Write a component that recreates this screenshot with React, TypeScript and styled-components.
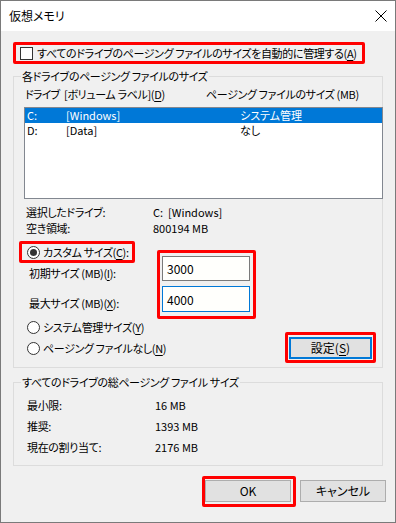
import React from "react";
import styled, { createGlobalStyle } from "styled-components";

const GlobalStyle = createGlobalStyle`
  html, body {
    margin: 0;
    padding: 0;
    background: #ffffff;
  }
  body {
    font-family: "Noto Sans CJK JP", "Noto Sans", sans-serif;
    font-size: 11px;
    font-feature-settings: "palt";
    letter-spacing: -0.35px;
    color: #000000;
  }
  u {
    text-underline-offset: 2px;
  }
`;

const Window = styled.div`
  width: 396px;
  height: 523px;
  box-sizing: border-box;
  border: 1px solid #7a7a7a;
  display: flex;
  flex-direction: column;
  background: #f0f0f0;
`;

const TitleBar = styled.div`
  height: 30px;
  flex-shrink: 0;
  background: #ffffff;
  display: flex;
  align-items: center;
  padding-left: 8px;
`;

const Title = styled.span`
  font-size: 12px;
  line-height: 16px;
  letter-spacing: 0;
`;

const CloseIcon = styled.svg`
  margin-left: auto;
  margin-right: 8px;
  display: block;
`;

const Body = styled.div`
  flex: 1;
  display: flex;
  flex-direction: column;
  padding: 0 12px;
`;

// red annotation frames drawn around the important controls
const Highlight = styled.div<{ $pad: string; $mt?: number; $ml?: string; $mr?: number }>`
  border: 3px solid #ff0000;
  border-radius: 2px;
  padding: ${(p) => p.$pad};
  margin-top: ${(p) => p.$mt ?? 0}px;
  margin-left: ${(p) => p.$ml ?? "0"};
  margin-right: ${(p) => p.$mr ?? 0}px;
  align-self: flex-start;
  display: flex;
  flex-direction: column;
`;

const CheckRow = styled.label`
  display: flex;
  align-items: center;
  height: 16px;
  gap: 4px;
  white-space: nowrap;
`;

const CheckBox = styled.span`
  width: 11px;
  height: 11px;
  border: 1px solid #333333;
  background: #ffffff;
  display: block;
`;

const Group = styled.fieldset<{ $mt: number; $pl: number; $pb: number }>`
  margin: ${(p) => p.$mt}px 0 0 0;
  padding: 0 0 ${(p) => p.$pb}px ${(p) => p.$pl}px;
  border: 1px solid #dcdcdc;
  min-width: 0;
`;

const Legend = styled.legend<{ $ml: number }>`
  margin-left: ${(p) => p.$ml}px;
  padding: 0 1px;
  line-height: 16px;
`;

const HeaderRow = styled.div`
  display: grid;
  grid-template-columns: 39px 142px 1fr;
  padding-left: 1px;
  margin-top: 2px;
  line-height: 16px;
  white-space: nowrap;
`;

const HeaderDrive = styled.span`
  letter-spacing: -0.8px;
`;

const ListBox = styled.div`
  margin-top: 5px;
  margin-right: -1px;
  height: 90px;
  border: 1px solid #828790;
  background: #ffffff;
`;

const ListRow = styled.div<{ $selected?: boolean }>`
  display: grid;
  grid-template-columns: 39px 174px 1fr;
  height: 15px;
  line-height: 15px;
  padding-left: 2px;
  letter-spacing: 0;
  background: ${(p) => (p.$selected ? "#0078d7" : "transparent")};
  color: ${(p) => (p.$selected ? "#ffffff" : "#000000")};
  white-space: nowrap;
  overflow: hidden;
`;

const InfoGrid = styled.div<{ $mt: number; $pl: number; $col: number; $rh: number }>`
  display: grid;
  grid-template-columns: ${(p) => p.$col}px 1fr;
  grid-auto-rows: ${(p) => p.$rh}px;
  align-items: center;
  margin-top: ${(p) => p.$mt}px;
  padding-left: ${(p) => p.$pl}px;
  white-space: nowrap;
`;

const Value = styled.span`
  letter-spacing: 0;
`;

const SplitRow = styled.div`
  display: flex;
  align-items: flex-start;
`;

const LeftCol = styled.div`
  width: 133px;
  flex-shrink: 0;
  display: flex;
  flex-direction: column;
`;

const RadioRow = styled.label`
  display: flex;
  align-items: center;
  height: 16px;
  gap: 3px;
  white-space: nowrap;
`;

const RadioCircle = styled.span<{ $checked?: boolean }>`
  width: 11px;
  height: 11px;
  border: 1px solid #333333;
  border-radius: 50%;
  background: #ffffff;
  display: flex;
  align-items: center;
  justify-content: center;
  &::after {
    content: "";
    width: 7px;
    height: 7px;
    border-radius: 50%;
    background: #333333;
    display: ${(p) => (p.$checked ? "block" : "none")};
  }
`;

const FieldLabel = styled.div<{ $mt: number }>`
  height: 26px;
  line-height: 26px;
  margin-top: ${(p) => p.$mt}px;
  padding-left: 5px;
  white-space: nowrap;
`;

const TextBox = styled.div<{ $focused?: boolean; $mt: number; $h: number }>`
  width: 82px;
  height: ${(p) => p.$h}px;
  margin-top: ${(p) => p.$mt}px;
  border: 1px solid ${(p) => (p.$focused ? "#0078d7" : "#7a7a7a")};
  background: #fffffc;
  display: flex;
  align-items: center;
  padding-left: 4px;
  font-size: 12px;
  letter-spacing: 0;
`;

const RadioList = styled.div`
  display: flex;
  flex-direction: column;
  gap: 5px;
  padding-left: 3px;
`;

const Button = styled.button<{ $default?: boolean; $w: number }>`
  width: ${(p) => p.$w}px;
  height: 22px;
  box-sizing: border-box;
  background: #e1e1e1;
  border: ${(p) => (p.$default ? "2px solid #0078d7" : "1px solid #adadad")};
  font: inherit;
  font-size: 12px;
  letter-spacing: 0;
  color: #000000;
  padding: 0;
  line-height: 18px;
  white-space: nowrap;
`;

const Footer = styled.div`
  display: flex;
  align-items: flex-start;
  justify-content: flex-end;
  margin-top: 10px;
  margin-right: -3px;
  gap: 4px;
`;

const CancelButton = styled(Button)`
  margin-top: 4px;
`;

export default function App() {
  return (
    <>
      <GlobalStyle />
      <Window>
        <TitleBar>
          <Title>仮想メモリ</Title>
          <CloseIcon width="12" height="12" viewBox="0 0 12 12">
            <path d="M0.5 0.5 L11.5 11.5 M11.5 0.5 L0.5 11.5" stroke="#000" strokeWidth="1" fill="none" />
          </CloseIcon>
        </TitleBar>
        <Body>
          <Highlight $pad="0 5px 0 4px" $mt={11}>
            <CheckRow>
              <CheckBox />
              <span>
                すべてのドライブのページング ファイルのサイズを自動的に管理する(<u>A</u>)
              </span>
            </CheckRow>
          </Highlight>

          <Group $mt={4} $pl={10} $pb={4}>
            <Legend $ml={-3}>各ドライブのページング ファイルのサイズ</Legend>
            <HeaderRow>
              <HeaderDrive>ドライブ</HeaderDrive>
              <span>
                [ボリューム ラベル](<u>D</u>)
              </span>
              <span>ページング ファイルのサイズ (MB)</span>
            </HeaderRow>
            <ListBox>
              <ListRow $selected>
                <span>C:</span>
                <span>[Windows]</span>
                <span>システム管理</span>
              </ListRow>
              <ListRow>
                <span>D:</span>
                <span>[Data]</span>
                <span>なし</span>
              </ListRow>
            </ListBox>

            <InfoGrid $mt={5} $pl={2} $col={127} $rh={16}>
              <span>選択したドライブ:</span>
              <Value>C:&nbsp;&nbsp;[Windows]</Value>
              <span>空き領域:</span>
              <Value>800194 MB</Value>
            </InfoGrid>

            <SplitRow>
              <LeftCol>
                <Highlight $pad="0 3px 0 5px" $mt={5} $ml="-5px">
                  <RadioRow>
                    <RadioCircle $checked />
                    <span>
                      カスタム サイズ(<u>C</u>):
                    </span>
                  </RadioRow>
                </Highlight>
                <FieldLabel $mt={-3}>
                  初期サイズ (MB)(<u>I</u>):
                </FieldLabel>
                <FieldLabel $mt={4}>
                  最大サイズ (MB)(<u>X</u>):
                </FieldLabel>
              </LeftCol>
              <Highlight $pad="3px 3px 4px 2px" $mt={14}>
                <TextBox $mt={0} $h={23}>
                  3000
                </TextBox>
                <TextBox $mt={5} $h={24} $focused>
                  4000
                </TextBox>
              </Highlight>
            </SplitRow>

            <SplitRow>
              <RadioList>
                <RadioRow>
                  <RadioCircle />
                  <span>
                    システム管理サイズ(<u>Y</u>)
                  </span>
                </RadioRow>
                <RadioRow>
                  <RadioCircle />
                  <span>
                    ページング ファイルなし(<u>N</u>)
                  </span>
                </RadioRow>
              </RadioList>
              <Highlight $pad="2px 1px 1px 1px" $mt={13} $ml="auto" $mr={6}>
                <Button $default $w={83}>
                  設定(<u>S</u>)
                </Button>
              </Highlight>
            </SplitRow>
          </Group>

          <Group $mt={6} $pl={13} $pb={8}>
            <Legend $ml={-6}>すべてのドライブの総ページング ファイル サイズ</Legend>
            <InfoGrid $mt={4} $pl={0} $col={128} $rh={21}>
              <span>最小限:</span>
              <Value>16 MB</Value>
              <span>推奨:</span>
              <Value>1393 MB</Value>
              <span>現在の割り当て:</span>
              <Value>2176 MB</Value>
            </InfoGrid>
          </Group>

          <Footer>
            <Highlight $pad="1px 2px 2px 0">
              <Button $w={86}>OK</Button>
            </Highlight>
            <CancelButton $w={86}>キャンセル</CancelButton>
          </Footer>
        </Body>
      </Window>
    </>
  );
}
